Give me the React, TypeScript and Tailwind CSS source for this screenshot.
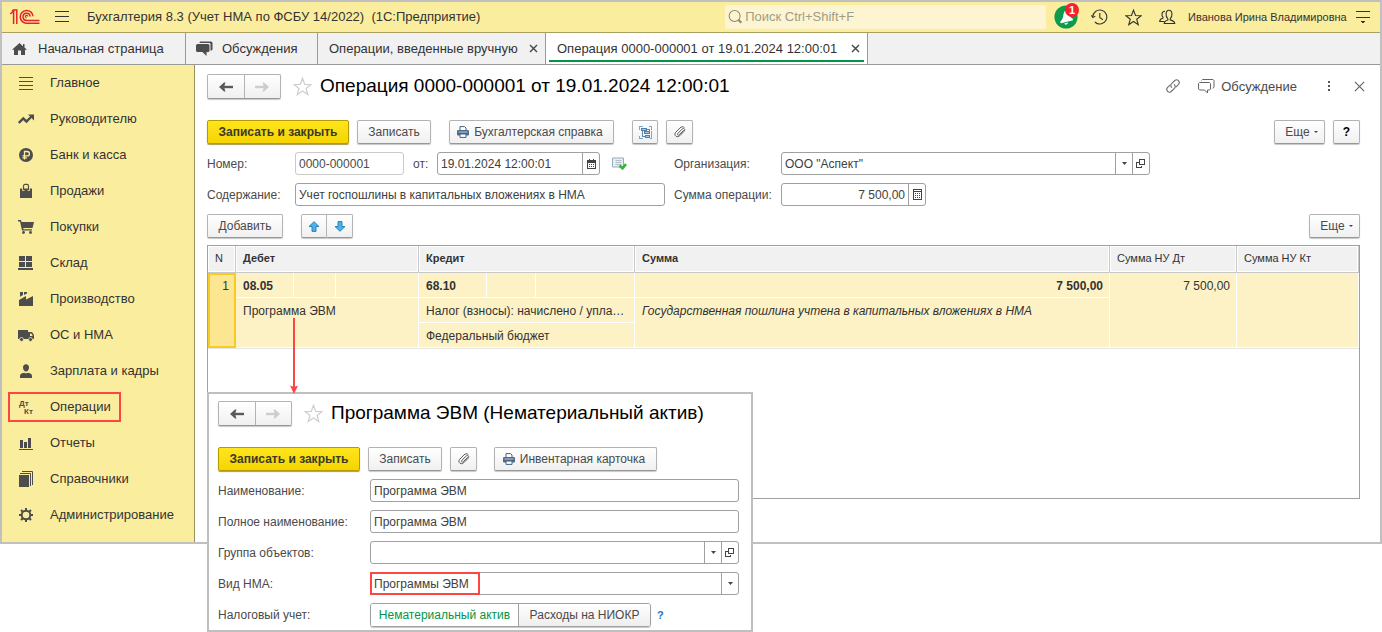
import React, { useState } from "react";

const buttonBase =
  "flex h-6 shrink-0 items-center justify-center rounded-[2px] border border-[#b3b3b3] border-b-[#979797] bg-linear-to-b from-white to-[#f0f0f0] text-xs whitespace-nowrap text-[#4a4a4a] shadow-[0_1px_1px_#c8c8c8]";

const primaryButton =
  "flex h-6 shrink-0 items-center justify-center rounded-[2px] border border-[#b59b00] bg-linear-to-b from-[#ffe51c] to-[#f5d400] text-xs font-bold whitespace-nowrap text-[#3b3a22] shadow-[0_1px_1px_#a99a50]";

const fieldBox =
  "flex h-[23px] items-stretch overflow-hidden rounded-[3px] border border-[#a0a0a0] bg-white text-xs text-[#404040]";

const fieldPart =
  "flex w-[17px] shrink-0 items-center justify-center border-l border-[#a0a0a0]";

/* ---------- icons ---------- */

function Logo() {
  return (
    <svg width="30" height="16" viewBox="0 0 30 16" fill="none" stroke="#e0262c" strokeWidth="1.5">
      <path d="M.3 5 3.600 2.200V15M2 1.800 3.500 1h3.300V15" />
      <path d="M23 7.200A6.400 6.400 0 1 0 16.600 14.200H29.500" />
      <path d="M20.200 7.500A3.600 3.600 0 1 0 16.600 11.400H29.500" />
      <path d="M17.800 7.600A1.200 1.200 0 1 0 16.600 8.800" strokeWidth="1.200" />
    </svg>
  );
}

function MenuIcon() {
  return (
    <svg width="15" height="12" viewBox="0 0 15 12" stroke="#333" strokeWidth="1" shapeRendering="crispEdges">
      <path d="M0 .5h14M0 5.500h14M0 10.500h14" />
    </svg>
  );
}

function SearchIcon() {
  return (
    <svg width="16" height="16" viewBox="0 0 16 16" fill="none" stroke="#8d8869">
      <circle cx="7" cy="7" r="5.800" strokeWidth="1.100" />
      <path d="m11 11 3 3" strokeWidth="2.200" />
    </svg>
  );
}

function BellIcon() {
  return (
    <svg width="24" height="24" viewBox="0 0 24 24">
      <circle cx="12" cy="12" r="11.600" fill="#0f9a4c" />
      <path d="M14.500 4C10.800 4.600 9.800 7.500 9.300 10.500 8.900 13.200 8 15.200 6 17l1 1.200 12-3-.3-1.400c-2-.8-2.700-2.300-3-4z" fill="#fff" />
      <path d="M10.200 18.500 14 17.600a2 2 0 0 1-3.800.9z" fill="#fff" />
    </svg>
  );
}

function HistoryIcon() {
  return (
    <svg width="17" height="16" viewBox="0 0 17 16" fill="none" stroke="#333" strokeWidth="1.100">
      <path d="M1.800 8A7 7 0 1 1 3.900 13" />
      <path d="M.4 6.400 1.900 8.600 4.300 7.100M8.800 4v4.500l3 2.300" />
    </svg>
  );
}

function StarIcon({ size, color }: { size: number; color: string }) {
  return (
    <svg width={size} height={size} viewBox="0 0 18 18" fill="none" stroke={color} strokeWidth="1.200">
      <path d="M9 1.200 11.100 6.900 17.100 7.100 12.400 10.800 14 16.600 9 13.200 4 16.600 5.600 10.800.9 7.100 6.900 6.900z" />
    </svg>
  );
}

function PeopleIcon() {
  return (
    <svg width="17" height="16" viewBox="0 0 17 16" fill="none" stroke="#333" strokeWidth="1.100">
      <path d="M5.500 12.500H.7c0-2 .7-2.500 3.300-3.400v-1C2.400 6.600 2.300 2.200 6 2.200" />
      <path d="M5.200 14.500c0-2 .9-2.700 3.700-3.600v-1C6.300 7.500 6.300 1.300 10 1.300s3.700 6.200 1.200 8.600v1c2.900.9 4.600 1.600 4.600 3.600z" />
    </svg>
  );
}

function OptionsIcon() {
  return (
    <svg width="15" height="15" viewBox="0 0 15 15" shapeRendering="crispEdges">
      <path d="M0 1.500h14M0 7.500h14" stroke="#333" />
      <path d="M4.500 11h5L7 14z" fill="#333" />
    </svg>
  );
}

function HomeIcon() {
  return (
    <svg width="16" height="14" viewBox="0 0 16 14" fill="#4d4d4d">
      <path d="M7.500 1 0 7.800h2V13h4V8.500h3V13h4V7.800h2L12.500 5.500V2H11v2.200z" />
    </svg>
  );
}

function ChatIcon() {
  return (
    <svg width="17" height="15" viewBox="0 0 17 15" fill="#4d4d4d">
      <path d="M1.500 3h10.500A1.500 1.500 0 0 1 13.500 4.500v5A1.500 1.500 0 0 1 12 11l-1.500.2V15L6.500 11h-5A1.500 1.500 0 0 1 0 9.500v-5A1.500 1.500 0 0 1 1.500 3z" />
      <path d="M3.500 2c0-1 .5-1.500 1.500-1.500h9.500C15.500.5 16.500 1 16.500 2v6c0 1-.7 1.500-2 1.500V3.500c0-1-.5-1.500-1.500-1.500z" />
    </svg>
  );
}

function ChatOutlineIcon() {
  return (
    <svg width="17" height="15" viewBox="0 0 17 15" fill="none" stroke="#666" strokeWidth="1">
      <path d="M1.500 3.500h10l1 1v5.500l-1 1H9.500v3L6.500 11H1.500l-1-1V4.500z" />
      <path d="M3.500 1.500 4.500.5h10.500l1 1v6.500L15 9.500" />
    </svg>
  );
}

function LinkIcon() {
  return (
    <svg width="16" height="16" viewBox="0 0 16 16" fill="none" stroke="#6e6e6e" strokeWidth="1.100" strokeLinecap="round">
      <path d="M6.600 9.400a2.600 2.600 0 0 1 0-3.700L9.800 2.500a2.700 2.700 0 0 1 3.800 3.800L11 8.800" />
      <path d="M9.400 6.600a2.600 2.600 0 0 1 0 3.700L6.200 13.500A2.700 2.700 0 0 1 2.400 9.700L5 7.200" />
    </svg>
  );
}

function CloseIcon({ size, color }: { size: number; color: string }) {
  return (
    <svg width={size} height={size} viewBox="0 0 10 10" stroke={color} strokeWidth="1.100">
      <path d="m.8.8 8.400 8.400M9.200.8.8 9.200" />
    </svg>
  );
}

function TabCloseIcon() {
  return (
    <svg width="9" height="9" viewBox="0 0 9 9" stroke="#444" strokeWidth="1.400">
      <path d="m1 1 7 7M8 1 1 8" />
    </svg>
  );
}

function ArrowIcon({ color, flip }: { color: string; flip?: boolean }) {
  return (
    <svg width="14" height="10" viewBox="0 0 14 10" className={flip ? "rotate-180" : ""}>
      <path d="M3 5h11" stroke={color} strokeWidth="2.400" />
      <path d="M0 5 5 .5h1.500L5 5l1.500 4.500H5z" fill={color} />
    </svg>
  );
}

function PrinterIcon() {
  return (
    <svg width="12" height="12" viewBox="0 0 12 12">
      <path d="M3 4V.6h4.500L9 2v2" fill="#fff" stroke="#4b6078" />
      <rect x="0" y="4" width="12" height="5.500" rx="1.200" fill="#4b6a8c" />
      <path d="M1.500 6h9" stroke="#b9cbe0" />
      <path d="M3 8h6v3.400H3z" fill="#fff" stroke="#4b6078" />
    </svg>
  );
}

function StructureIcon() {
  return (
    <svg width="13" height="13" viewBox="0 0 13 13" shapeRendering="crispEdges">
      <path d="M3.500.5h-3v3M9.500.5h3v3M3.500 12.500h-3v-3M12.500 5v7.500H11" stroke="#7fa9c9" fill="none" />
      <path d="M3.500 5v5.500H7M8 3h2.500v2" stroke="#5b88ad" fill="none" />
      <path d="M2.500 2.500h5v2h-5zM5.500 5.500h5v2h-5zM6.500 9.500h4v2h-4z" fill="#a9c9df" stroke="#4f81a9" />
    </svg>
  );
}

function ClipIcon() {
  return (
    <svg width="12" height="12" viewBox="0 0 12 12" fill="none" stroke="#5a5a5a" strokeWidth="1" strokeLinecap="round">
      <path d="M9.500 4.500 5.400 8.700c-1.200 1.200-2.600-.1-1.500-1.300L7.800 3.300c2-1.900 4.100.1 2.200 2.100L5.800 9.700C3 12.500-.9 9 1.800 6.200L6 1.900C7.500.5 9 .5 10 1.200" />
    </svg>
  );
}

function CalendarIcon() {
  return (
    <svg width="9" height="10" viewBox="0 0 9 10" shapeRendering="crispEdges">
      <path d="M0 1h9v9H0zM2 0h1v1H2zM6 0h1v1H6z" fill="#444" />
      <path d="M1 4h7v5H1z" fill="#fff" />
      <path d="M2 5.500h1M4 5.500h1M6 5.500h1M2 7.500h1M4 7.500h1M6 7.500h1" stroke="#444" />
    </svg>
  );
}

function CalculatorIcon() {
  return (
    <svg width="9" height="11" viewBox="0 0 9 11" shapeRendering="crispEdges">
      <path d="M.5.5h8v10h-8zM1 2.500h7" fill="#fff" stroke="#444" />
      <path d="M2 4.500h1M4 4.500h1M6 4.500h1M2 6.500h1M4 6.500h1M6 6.500h1M2 8.500h1M4 8.500h1M6 8.500h1" stroke="#444" />
    </svg>
  );
}

function PostedIcon() {
  return (
    <svg width="15" height="13" viewBox="0 0 15 13">
      <path d="M.5 1h11v9h-11z" fill="#e9eff3" stroke="#9aabb8" />
      <path d="M3.500 3.500h6M3.500 5.500h6M3.500 7.500h6" stroke="#b0bec9" />
      <path d="m7.500 8.500 3 2.800L14 7.200" stroke="#35b53a" strokeWidth="2.600" fill="none" />
    </svg>
  );
}

function OpenIcon() {
  return (
    <svg width="10" height="10" viewBox="0 0 10 10" fill="none" stroke="#444" shapeRendering="crispEdges">
      <path d="M3.500.5h5v5h-5zM2.500 3.500h-2v5h5v-2" />
    </svg>
  );
}

function Caret() {
  return (
    <svg width="5" height="3" viewBox="0 0 5 3" fill="#444">
      <path d="M0 0h5L2.500 3z" />
    </svg>
  );
}

function MoveIcon({ flip }: { flip?: boolean }) {
  return (
    <svg width="12" height="11" viewBox="0 0 12 11" className={flip ? "rotate-180" : ""}>
      <path d="M6 .7 11 5.500H8V10.400H4V5.500H1z" fill="#4ab3ee" stroke="#2377ad" strokeWidth=".9" />
    </svg>
  );
}

function Glyph({ children }: { children: React.ReactNode }) {
  return (
    <svg width="16" height="16" viewBox="0 0 16 16" fill="#4d4d4d" className="shrink-0">
      {children}
    </svg>
  );
}

const sections: { label: string; icon: React.ReactNode; marked?: boolean }[] = [
  {
    label: "Главное",
    icon: <path d="M1 2h14v1H1zM1 6h14v1H1zM1 10h14v1H1zM1 14h14v1H1z" />,
  },
  {
    label: "Руководителю",
    icon: (
      <>
        <path d="M.8 12 5.300 7.500l3.200 3L13 6" fill="none" stroke="#4d4d4d" strokeWidth="2.400" />
        <path d="M10 3.500h6v6z" />
      </>
    ),
  },
  {
    label: "Банк и касса",
    icon: (
      <>
        <circle cx="8" cy="8" r="7" />
        <path d="M6.500 12.500v-8h2.700a2.200 2.200 0 0 1 0 4.400H4.500M4.500 10.800h4.500" fill="none" stroke="#fbeea0" strokeWidth="1.300" />
      </>
    ),
  },
  {
    label: "Продажи",
    icon: (
      <>
        <path d="M2 5.500h12V15H2z" />
        <path d="M5.500 7V3c0-1 .7-1.600 1.500-1.600h2c.8 0 1.500.6 1.500 1.600v4" fill="none" stroke="#4d4d4d" strokeWidth="1.200" />
        <path d="M4.500 5v2.500h2M11.500 5v2.500h-2" fill="none" stroke="#fbeea0" strokeWidth=".8" />
      </>
    ),
  },
  {
    label: "Покупки",
    icon: (
      <>
        <path d="M0 1h3l.5 2H16l-1.500 6H5.200l.3 1.200H14V11.500H4L2 2.500H0z" />
        <circle cx="5.500" cy="13.500" r="1.400" />
        <circle cx="12.500" cy="13.500" r="1.400" />
      </>
    ),
  },
  {
    label: "Склад",
    icon: <path d="M1 1h6v5H1zM8 1h6v5H8zM1 7h6v5H1zM8 7h6v5H8zM0 13h15v2H0z" />,
  },
  {
    label: "Производство",
    icon: <path d="M1 15V9l7-4v3.500L15 5v10zM2 1h3v3L2 5.700zM6 1h3v1.500L6 4z" />,
  },
  {
    label: "ОС и НМА",
    icon: (
      <>
        <path d="M0 3h10v9H0zM10 5h4l2 3v4h-6zM12 6.500V9h2.800L13.300 6.500z" fillRule="evenodd" />
        <circle cx="3.500" cy="12.500" r="2" stroke="#fbeea0" strokeWidth=".8" />
        <circle cx="12.500" cy="12.500" r="2" stroke="#fbeea0" strokeWidth=".8" />
      </>
    ),
  },
  {
    label: "Зарплата и кадры",
    icon: (
      <>
        <path d="M8 1.200c2 0 3 1.300 3 3.200S9.700 8.500 8 8.500 5 6.300 5 4.400s1-3.200 3-3.200z" />
        <path d="M2 15v-2c0-2 1.500-2.800 4-3.300l2 .8 2-.8c2.500.5 4 1.300 4 3.300v2z" />
      </>
    ),
  },
  {
    label: "Операции",
    marked: true,
    icon: (
      <g className="text-[8px] font-bold">
        <text x="1" y="7">Дт</text>
        <text x="6" y="15">Кт</text>
      </g>
    ),
  },
  {
    label: "Отчеты",
    icon: <path d="M2 5h3v8H2zM6 7h3v6H6zM10 3h3v10h-3zM1 14h14v1H1z" />,
  },
  {
    label: "Справочники",
    icon: (
      <>
        <path d="M1 4h10v12H1z" />
        <path d="M2 2.500h10.500V15M4 .5h10.500V14" fill="none" stroke="#4d4d4d" />
      </>
    ),
  },
  {
    label: "Администрирование",
    icon: (
      <>
        <circle cx="8" cy="8" r="4.300" fill="none" stroke="#4d4d4d" strokeWidth="2" />
        <path
          d="M8 1v2.500M8 12.500V15M1 8h2.500M12.500 8H15M3 3l1.800 1.800M11.200 11.200 13 13M3 13l1.800-1.800M11.200 4.800 13 3"
          stroke="#4d4d4d"
          strokeWidth="2"
        />
      </>
    ),
  },
];

/* ---------- shared parts ---------- */

function HistoryButtons() {
  return (
    <div className="flex h-[25px] w-[74px] rounded-[2px] border border-[#b3b3b3] border-b-[#979797] bg-linear-to-b from-white to-[#f0f0f0] shadow-[0_1px_1px_#c8c8c8]">
      <button type="button" aria-label="Назад" className="flex flex-1 items-center justify-center border-r border-[#b3b3b3]">
        <ArrowIcon color="#5a5a5a" />
      </button>
      <button type="button" aria-label="Вперед" className="flex flex-1 items-center justify-center">
        <ArrowIcon color="#cdcdcd" flip />
      </button>
    </div>
  );
}

function FormTitle({ children }: { children: React.ReactNode }) {
  return (
    <>
      <HistoryButtons />
      <button type="button" aria-label="В избранное" className="ml-3 flex">
        <StarIcon size={19} color="#cfcfcf" />
      </button>
      <h1 className="ml-2 pb-[2px] text-[19px] leading-[23px] whitespace-nowrap text-black">{children}</h1>
    </>
  );
}

function SelectField({ id, value, hasOpen }: { id: string; value: string; hasOpen?: boolean }) {
  return (
    <div className={`${fieldBox} w-[369px]`}>
      <div className="relative flex flex-1">
        <select id={id} defaultValue={value} className="w-full appearance-none bg-transparent pr-5 pl-[3px] outline-none">
          <option>{value}</option>
        </select>
        <span className="pointer-events-none absolute inset-y-0 right-0 flex w-[17px] items-center justify-center border-l border-[#a0a0a0]">
          <Caret />
        </span>
      </div>
      {hasOpen && (
        <button type="button" aria-label="Открыть" className={fieldPart}>
          <OpenIcon />
        </button>
      )}
    </div>
  );
}

function MoreButton() {
  return (
    <button type="button" className={`${buttonBase} w-[51px] gap-1 pl-1`}>
      Еще
      <svg width="4" height="2" viewBox="0 0 4 2" fill="#444">
        <path d="M0 0h4L2 2z" />
      </svg>
    </button>
  );
}

/* ---------- page regions ---------- */

function TopBar() {
  return (
    <header className="flex h-[31px] items-center border-b border-[#a89f60] bg-[#fbed9e] pr-[9px] pl-2">
      <Logo />
      <button type="button" aria-label="Меню" className="ml-[15px]">
        <MenuIcon />
      </button>
      <span className="ml-[17px] flex-1 text-[13px] whitespace-pre text-[#333]">
        {"Бухгалтерия 8.3 (Учет НМА по ФСБУ 14/2022)  (1С:Предприятие)"}
      </span>
      <label className="flex h-6 w-[321px] items-center rounded-[2px] bg-[#fdf5d2] pl-[3px]">
        <SearchIcon />
        <input
          type="search"
          aria-label="Поиск"
          placeholder="Поиск Ctrl+Shift+F"
          className="ml-[2px] w-full bg-transparent text-[13px] outline-none placeholder:text-[#a09c86]"
        />
      </label>
      <button type="button" aria-label="Уведомления" className="relative ml-2">
        <BellIcon />
        <span className="absolute -top-[2px] -right-[1px] flex size-[14px] items-center justify-center rounded-full bg-[#f5222d] text-[11px] leading-none font-bold text-white">
          1
        </span>
      </button>
      <button type="button" aria-label="История" className="ml-[13px]">
        <HistoryIcon />
      </button>
      <button type="button" aria-label="Избранное" className="ml-[17px]">
        <StarIcon size={17} color="#333" />
      </button>
      <button type="button" aria-label="Пользователи" className="ml-[17px]">
        <PeopleIcon />
      </button>
      <span className="ml-3 w-[155px] text-[11px] whitespace-nowrap text-[#333]">Иванова Ирина Владимировна</span>
      <button type="button" aria-label="Настройки" className="ml-[13px]">
        <OptionsIcon />
      </button>
    </header>
  );
}

function Tabs() {
  const tab = "flex items-center border-r border-[#999] text-[13px] whitespace-nowrap text-[#333]";
  return (
    <nav className="flex h-8 border-b border-[#999] bg-[#f1f1f1]">
      <a href="#home" className={`${tab} w-[184px] gap-[10px] pl-[10px]`}>
        <HomeIcon />
        Начальная страница
      </a>
      <a href="#talks" className={`${tab} w-[132px] gap-[9px] pl-[10px]`}>
        <ChatIcon />
        Обсуждения
      </a>
      <div className={`${tab} w-[228px] justify-between pr-[6px] pl-[11px]`}>
        <a href="#operations">Операции, введенные вручную</a>
        <button type="button" aria-label="Закрыть вкладку" className="p-px">
          <TabCloseIcon />
        </button>
      </div>
      <div className={`${tab} relative w-[322px] justify-between bg-white pr-[6px] pl-[11px]`}>
        <a href="#operation">Операция 0000-000001 от 19.01.2024 12:00:01</a>
        <button type="button" aria-label="Закрыть вкладку" className="p-px">
          <TabCloseIcon />
        </button>
        <span className="absolute right-[3px] bottom-[2px] left-[3px] h-[2px] bg-[#009646]" />
      </div>
    </nav>
  );
}

function Sidebar() {
  return (
    <aside className="w-[193px] shrink-0 border-r border-[#98925c] bg-[#fbed9e]">
      {sections.map((s) => (
        <a key={s.label} href="#section" className="relative flex h-9 items-center pl-4 text-[13px] text-[#333]">
          <Glyph>{s.icon}</Glyph>
          <span className="ml-4">{s.label}</span>
          {s.marked && <span className="absolute top-[3px] left-[6px] h-[30px] w-[113px] border-2 border-[#fb4646]" />}
        </a>
      ))}
    </aside>
  );
}

function EntriesTable() {
  const head =
    "h-[27px] border-r border-b border-[#c8c8c8] bg-[#f1f1f1] px-[7px] pb-[2px] text-left text-[11px] shadow-[inset_0_0_0_1px_#fff]";
  const cell = "h-[25px] border-r border-b border-white bg-[#fdf1c6] pt-[2px] pr-[6px] pl-[7px] align-top leading-[22px]";
  return (
    <div className="mt-[7px] min-h-[254px] border border-[#a0a0a0]">
      <table className="w-full table-fixed border-separate border-spacing-0 text-xs text-[#333]">
        <colgroup>
          <col className="w-7" />
          <col className="w-[58px]" />
          <col className="w-[42px]" />
          <col className="w-[83px]" />
          <col className="w-[68px]" />
          <col className="w-[49px]" />
          <col className="w-[99px]" />
          <col />
          <col className="w-[127px]" />
          <col className="w-[122px]" />
        </colgroup>
        <thead>
          <tr>
            <th className={`${head} font-normal`}>N</th>
            <th colSpan={3} className={head}>Дебет</th>
            <th colSpan={3} className={head}>Кредит</th>
            <th className={head}>Сумма</th>
            <th className={`${head} font-normal`}>Сумма НУ Дт</th>
            <th className={`${head} font-normal`}>Сумма НУ Кт</th>
          </tr>
        </thead>
        <tbody>
          <tr>
            <td rowSpan={3} className="border-2 border-[#f9ca24] bg-[#fce692] pr-[5px] text-right align-top leading-[22px]">1</td>
            <td className={`${cell} font-bold`}>08.05</td>
            <td className={cell} />
            <td className={cell} />
            <td className={`${cell} font-bold`}>68.10</td>
            <td className={cell} />
            <td className={cell} />
            <td className={`${cell} text-right font-bold`}>7 500,00</td>
            <td rowSpan={3} className={`${cell} text-right`}>7 500,00</td>
            <td rowSpan={3} className={cell} />
          </tr>
          <tr>
            <td rowSpan={2} colSpan={3} className={cell}>Программа ЭВМ</td>
            <td colSpan={3} className={`${cell} whitespace-nowrap`}>Налог (взносы): начислено / упла…</td>
            <td rowSpan={2} className={`${cell} italic`}>Государственная пошлина учтена в капитальных вложениях в НМА</td>
          </tr>
          <tr>
            <td colSpan={3} className={cell}>Федеральный бюджет</td>
          </tr>
        </tbody>
      </table>
      <div className="border-t border-[#e4e4e4]" />
    </div>
  );
}

function OperationForm() {
  return (
    <main className="min-w-0 flex-1 bg-white pt-[9px] pr-5 pb-[43px] pl-3 text-xs text-[#4a4a4a]">
      <div className="flex items-center">
        <FormTitle>Операция 0000-000001 от 19.01.2024 12:00:01</FormTitle>
        <div className="-mr-[5px] ml-auto flex items-center text-[13px]">
          <button type="button" aria-label="Ссылка">
            <LinkIcon />
          </button>
          <button type="button" className="ml-[17px] flex items-center gap-[6px]">
            <ChatOutlineIcon />
            Обсуждение
          </button>
          <button type="button" aria-label="Действия" className="ml-[30px]">
            <svg width="4" height="11" viewBox="0 0 4 11" fill="#555" shapeRendering="crispEdges">
              <path d="M1 0h2v2H1zM1 4h2v2H1zM1 8h2v2H1z" />
            </svg>
          </button>
          <button type="button" aria-label="Закрыть" className="ml-[23px]">
            <CloseIcon size={11} color="#666" />
          </button>
        </div>
      </div>

      <div className="mt-[21px] flex">
        <button type="button" className={`${primaryButton} w-[142px]`}>Записать и закрыть</button>
        <button type="button" className={`${buttonBase} ml-2 w-[74px]`}>Записать</button>
        <button type="button" className={`${buttonBase} ml-[18px] w-[165px] gap-[5px] pr-[3px]`}>
          <PrinterIcon />
          Бухгалтерская справка
        </button>
        <button type="button" aria-label="Структура" className={`${buttonBase} ml-[18px] w-[26px]`}>
          <StructureIcon />
        </button>
        <button type="button" aria-label="Файлы" className={`${buttonBase} ml-2 w-[27px]`}>
          <ClipIcon />
        </button>
        <div className="ml-auto flex gap-2">
          <MoreButton />
          <button type="button" aria-label="Справка" className={`${buttonBase} w-[27px] font-bold text-black`}>?</button>
        </div>
      </div>

      <div className="mt-2 grid grid-cols-[88px_370px_116px_1fr] items-center gap-y-2">
        <label htmlFor="number">Номер:</label>
        <div className="flex items-center">
          <input
            id="number"
            defaultValue="0000-000001"
            className="h-[23px] w-[109px] rounded-[3px] border border-[#cacaca] px-[3px] outline-none"
          />
          <label htmlFor="date" className="w-[33px] pl-[9px]">от:</label>
          <div className={`${fieldBox} w-[163px]`}>
            <input id="date" defaultValue="19.01.2024 12:00:01" className="min-w-0 flex-1 px-[3px] outline-none" />
            <button type="button" aria-label="Календарь" className={fieldPart}>
              <CalendarIcon />
            </button>
          </div>
          <span className="ml-3">
            <PostedIcon />
          </span>
        </div>
        <label htmlFor="org" className="pl-[9px]">Организация:</label>
        <SelectField id="org" value={'ООО "Аспект"'} hasOpen />

        <label htmlFor="content">Содержание:</label>
        <input
          id="content"
          defaultValue="Учет госпошлины в капитальных вложениях в НМА"
          className={`${fieldBox} px-[3px] outline-none`}
        />
        <label htmlFor="sum" className="pl-[9px] whitespace-nowrap">Сумма операции:</label>
        <div className={`${fieldBox} w-[145px]`}>
          <input id="sum" defaultValue="7 500,00" className="min-w-0 flex-1 px-[3px] text-right outline-none" />
          <button type="button" aria-label="Калькулятор" className={fieldPart}>
            <CalculatorIcon />
          </button>
        </div>
      </div>

      <div className="mt-2 flex">
        <button type="button" className={`${buttonBase} w-[76px]`}>Добавить</button>
        <button type="button" aria-label="Переместить вверх" className={`${buttonBase} ml-[18px] w-[26px] rounded-r-none`}>
          <MoveIcon />
        </button>
        <button type="button" aria-label="Переместить вниз" className={`${buttonBase} w-[26px] rounded-l-none border-l-0`}>
          <MoveIcon flip />
        </button>
        <div className="ml-auto">
          <MoreButton />
        </div>
      </div>

      <EntriesTable />
    </main>
  );
}

function AssetWindow() {
  const [tax, setTax] = useState("asset");
  return (
    <section className="absolute top-[392px] left-[207px] w-[546px] border-2 border-[#bfbfbf] bg-white px-[9px] pt-[7px] pb-[3px] text-xs text-[#4a4a4a]">
      <div className="flex items-center">
        <FormTitle>Программа ЭВМ (Нематериальный актив)</FormTitle>
      </div>
      <div className="mt-[21px] flex">
        <button type="button" className={`${primaryButton} w-[142px]`}>Записать и закрыть</button>
        <button type="button" className={`${buttonBase} ml-2 w-[74px]`}>Записать</button>
        <button type="button" aria-label="Файлы" className={`${buttonBase} ml-2 w-[27px]`}>
          <ClipIcon />
        </button>
        <button type="button" className={`${buttonBase} ml-[17px] w-[163px] gap-[5px] pr-[3px]`}>
          <PrinterIcon />
          Инвентарная карточка
        </button>
      </div>
      <div className="mt-2 grid grid-cols-[152px_369px] items-center gap-y-2">
        <label htmlFor="name">Наименование:</label>
        <input id="name" defaultValue="Программа ЭВМ" className={`${fieldBox} px-[3px] outline-none`} />
        <label htmlFor="full-name">Полное наименование:</label>
        <input id="full-name" defaultValue="Программа ЭВМ" className={`${fieldBox} px-[3px] outline-none`} />
        <label htmlFor="group">Группа объектов:</label>
        <SelectField id="group" value="" hasOpen />
        <label htmlFor="kind">Вид НМА:</label>
        <div className="relative">
          <SelectField id="kind" value="Программы ЭВМ" />
          <span className="pointer-events-none absolute inset-y-0 left-0 w-[110px] border-2 border-[#fb4646]" />
        </div>
        <span id="tax-label">Налоговый учет:</span>
        <div role="radiogroup" aria-labelledby="tax-label" className="flex h-6 items-center">
          <div className="flex h-6 rounded-[3px] border border-[#a0a0a0] shadow-[0_1px_1px_#c8c8c8]">
            <label className="relative flex w-[148px] items-center justify-center rounded-l-[2px] border-r border-[#a0a0a0] bg-linear-to-b from-white to-[#eeeeee] has-checked:from-white has-checked:to-white has-checked:text-[#009646]">
              <input type="radio" name="tax" className="sr-only" checked={tax === "asset"} onChange={() => setTax("asset")} />
              Нематериальный актив
            </label>
            <label className="relative flex w-[131px] items-center justify-center rounded-r-[2px] bg-linear-to-b from-white to-[#eeeeee] has-checked:from-white has-checked:to-white has-checked:text-[#009646]">
              <input type="radio" name="tax" className="sr-only" checked={tax === "costs"} onChange={() => setTax("costs")} />
              Расходы на НИОКР
            </label>
          </div>
          <button type="button" className="ml-[6px] text-[11px] font-bold text-[#1a78c2]">?</button>
        </div>
      </div>
    </section>
  );
}

export default function App() {
  return (
    <div className="relative min-h-screen bg-white font-['Liberation_Sans',Arial,sans-serif]">
      <div className="border-2 border-[#c0c0c0]">
        <TopBar />
        <Tabs />
        <div className="flex">
          <Sidebar />
          <OperationForm />
        </div>
      </div>
      <AssetWindow />
      <svg width="10" height="76" viewBox="0 0 10 76" className="pointer-events-none absolute top-[318px] left-[289px]">
        <path d="M5 0v70" stroke="#fb4646" strokeWidth="2" />
        <path d="M1 67.500 5 69l4-1.500L5 76z" fill="#fb4646" />
      </svg>
    </div>
  );
}
